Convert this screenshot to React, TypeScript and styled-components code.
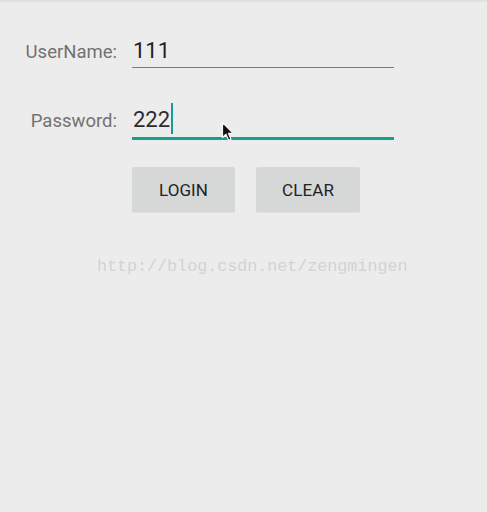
import React from "react";
import styled, { createGlobalStyle } from "styled-components";

const Global = createGlobalStyle`
  html, body { margin: 0; padding: 0; background: #ececec; }
  body { font-family: Roboto, "Noto Sans", Arial, sans-serif; }
`;

const Screen = styled.div`
  position: relative;
  width: 487px;
  height: 512px;
  background: #ececec;
  overflow: hidden;
`;

const TopStrip = styled.div`
  height: 2px;
  background: #e1e1e1;
`;

const Form = styled.div`
  display: grid;
  grid-template-columns: 117px 262px;
  column-gap: 15px;
  padding-top: 36px;
`;

const Row = styled.div`
  display: contents;
`;

const Label = styled.span<{ $top: number }>`
  grid-column: 1;
  align-self: baseline;
  justify-self: end;
  margin-top: ${(p) => p.$top}px;
  font-size: 18.5px;
  line-height: 26px;
  color: #727272;
  white-space: nowrap;
`;

const Field = styled.div<{ $focused?: boolean; $top: number }>`
  grid-column: 2;
  align-self: baseline;
  position: relative;
  margin-top: ${(p) => p.$top}px;
  padding: 0 0 3px 1px;
  display: flex;
  align-items: center;
  font-size: 22px;
  line-height: 26px;
  color: ${(p) => (p.$focused ? "#2b2b2b" : "#1f1f1f")};
  border-bottom: ${(p) => (p.$focused ? "3px solid #13a08f" : "1px solid #7a7a7a")};
`;

const Caret = styled.span`
  display: inline-block;
  width: 2px;
  height: 31px;
  margin-left: 1px;
  margin-top: -2px;
  background: #13a08f;
`;

const Buttons = styled.div`
  grid-column: 2;
  display: flex;
  gap: 21px;
  margin-top: 27px;
`;

const Button = styled.button<{ $w: number }>`
  width: ${(p) => p.$w}px;
  height: 45px;
  border: none;
  border-radius: 2px;
  background: #d6d7d7;
  box-shadow: 0 1px 1px rgba(0, 0, 0, 0.06);
  font-family: Roboto, "Noto Sans", Arial, sans-serif;
  font-size: 17px;
  color: #222;
  letter-spacing: 0.1px;
  padding: 0;
`;

const Watermark = styled.div`
  margin-top: 45px;
  padding-left: 97px;
  font-family: "Liberation Mono", "DejaVu Sans Mono", monospace;
  font-size: 16.7px;
  line-height: 20px;
  color: #d3d3d3;
  white-space: nowrap;
`;

const Pointer = styled.svg`
  position: absolute;
  left: 221px;
  top: 121px;
`;

export default function App() {
  return (
    <>
      <Global />
      <Screen>
        <TopStrip />
        <Form>
          <Row>
            <Label $top={0}>UserName:</Label>
            <Field $top={0}>111</Field>
          </Row>
          <Row>
            <Label $top={37}>Password:</Label>
            <Field $top={37} $focused>
              222
              <Caret />
            </Field>
          </Row>
          <Buttons>
            <Button $w={103}>LOGIN</Button>
            <Button $w={104}>CLEAR</Button>
          </Buttons>
        </Form>
        <Watermark>http://blog.csdn.net/zengmingen</Watermark>
        <Pointer width="14" height="22" viewBox="0 0 14 22">
          <path
            d="M1.5 1.5 L1.5 16.5 L5 13.2 L7.6 19.2 L10 18.2 L7.5 12.4 L12.2 12.4 Z"
            fill="#111"
            stroke="#f4f4f4"
            strokeWidth="1.2"
            strokeLinejoin="round"
          />
        </Pointer>
      </Screen>
    </>
  );
}
